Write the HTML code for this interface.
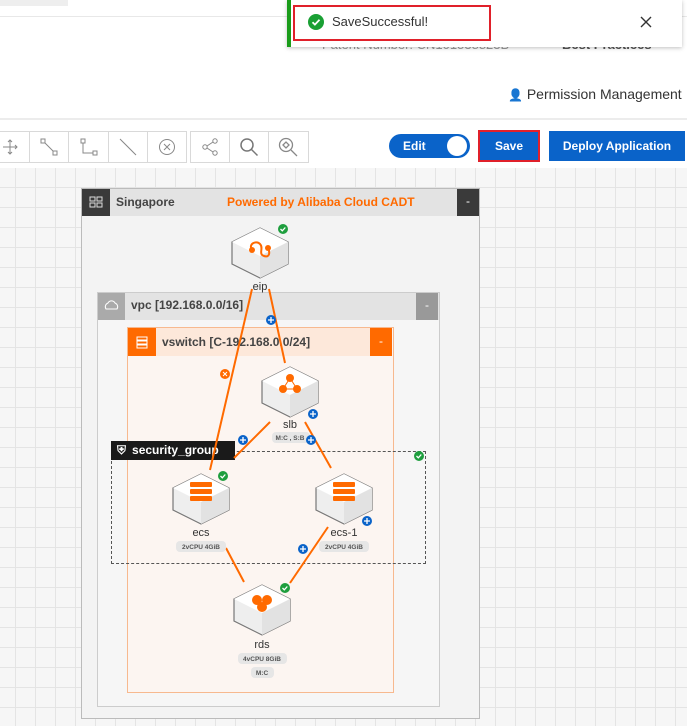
<!DOCTYPE html>
<html><head><meta charset="utf-8"><style>
body{margin:0;width:687px;height:726px;overflow:hidden;background:#fff;font-family:"Liberation Sans",sans-serif;position:relative}
.abs{position:absolute}
.grid{left:0;top:168px;width:687px;height:558px;background-color:#f6f6f6;background-image:linear-gradient(#e4e4e4 1px,transparent 1px),linear-gradient(90deg,#e4e4e4 1px,transparent 1px);background-size:20px 20px;background-position:15px 19px}
.tb{top:131px;height:30px;border:1px solid #d9d9d9;background:#fff;display:flex}
.tb div{width:44px;border-right:1px solid #d9d9d9;display:flex;align-items:center;justify-content:center}
.tb div:last-child{border-right:none}
</style></head><body>
<div class="abs" style="left:0;top:0;width:687px;height:16px;border-bottom:1px solid #e8e8e8"></div>
<div class="abs" style="left:0;top:0;width:68px;height:6px;background:#eee"></div>
<div class="abs" style="left:322px;top:37px;font-size:13px;color:#999">Patent Number: CN101538823B</div>
<div class="abs" style="left:562px;top:37px;font-size:13px;color:#555;font-weight:bold">Best Practices</div>
<div class="abs" style="left:0;top:118px;width:687px;border-top:2px solid #ececec"></div>
<div class="abs" style="left:508px;top:86px;font-size:14px;color:#333"><span style="font-size:12px">&#x1F464;</span> Permission Management</div>

<div class="abs" style="left:287px;top:0;width:391px;height:47px;background:#fff;box-shadow:0 1px 4px rgba(0,0,0,.25);border-left:4px solid #1a9c1a"></div>
<div class="abs" style="left:293px;top:5px;width:194px;height:32px;border:2px solid #e0202a"></div>
<div class="abs" style="left:308px;top:14px;width:16px;height:16px;border-radius:50%;background:#1aa034"><svg width="16" height="16"><path d="M4.5 8.2l2.4 2.4 4.6-4.8" stroke="#fff" stroke-width="1.8" fill="none"/></svg></div>
<div class="abs" style="left:332px;top:14px;font-size:13px;color:#333">SaveSuccessful!</div>
<svg class="abs" style="left:640px;top:16px" width="12" height="12"><path d="M1 1l10 10M11 1L1 11" stroke="#333" stroke-width="1.4"/></svg>

<div class="abs tb" style="left:-10px;width:195px">
<div><svg width="16" height="16" stroke="#888" fill="none"><path d="M8 1v14M1 8h14M6 3l2-2 2 2M6 13l2 2 2-2M13 6l2 2-2 2"/></svg></div>
<div><svg width="20" height="20" stroke="#888" fill="none"><rect x="2" y="2" width="4" height="4"/><rect x="14" y="14" width="4" height="4"/><path d="M6 6l8 8"/></svg></div>
<div><svg width="20" height="20" stroke="#888" fill="none"><rect x="2" y="2" width="4" height="4"/><rect x="14" y="14" width="4" height="4"/><path d="M4 6v10h10"/></svg></div>
<div><svg width="20" height="20" stroke="#888"><path d="M2 2l16 16"/></svg></div>
<div><svg width="18" height="18" stroke="#888" fill="none"><circle cx="9" cy="9" r="7.5"/><path d="M6 6l6 6M12 6l-6 6"/></svg></div>
</div>
<div class="abs tb" style="left:190px;width:117px">
<div style="width:38px"><svg width="18" height="18" stroke="#888" fill="none"><circle cx="4" cy="9" r="2.2"/><circle cx="14" cy="3" r="2.2"/><circle cx="14" cy="15" r="2.2"/><path d="M6 8l6-4M6 10l6 4"/></svg></div>
<div style="width:38px"><svg width="20" height="20" stroke="#777" fill="none" stroke-width="1.5"><circle cx="8" cy="8" r="6"/><path d="M12.5 12.5l6 6"/></svg></div>
<div style="width:38px"><svg width="20" height="20" stroke="#888" fill="none" stroke-width="1.3"><circle cx="8" cy="8" r="6.5"/><path d="M13 13l6 6M5 8l3-3 3 3-3 3z"/></svg></div>
</div>
<div class="abs" style="left:389px;top:134px;width:81px;height:24px;border-radius:12px;background:#0a63c9"></div>
<div class="abs" style="left:403px;top:139px;font-size:12px;color:#fff;font-weight:bold">Edit</div>
<div class="abs" style="left:447px;top:136px;width:20px;height:20px;border-radius:50%;background:#fff"></div>
<div class="abs" style="left:478px;top:130px;width:58px;height:28px;background:#0a63c9;border:2px solid #e0202a;color:#fff;font-size:12px;font-weight:bold;text-align:center;line-height:29px">Save</div>
<div class="abs" style="left:549px;top:131px;width:136px;height:30px;background:#0a63c9;color:#fff;font-size:12px;font-weight:bold;text-align:center;line-height:31px">Deploy Application</div>

<div class="abs grid"></div>

<div class="abs" style="left:81px;top:188px;width:397px;height:529px;background:#f3f3f3;border:1px solid #bbb"></div>
<div class="abs" style="left:82px;top:189px;width:397px;height:27px;background:#e3e3e3"></div>
<div class="abs" style="left:82px;top:189px;width:28px;height:27px;background:#3a3a3a"><svg width="28" height="27" stroke="#ddd" fill="none"><rect x="8" y="8" width="5" height="4"/><rect x="15" y="8" width="5" height="4"/><rect x="8" y="14" width="5" height="4"/><rect x="15" y="14" width="5" height="4"/></svg></div>
<div class="abs" style="left:116px;top:195px;font-size:12px;font-weight:bold;color:#444">Singapore</div>
<div class="abs" style="left:227px;top:195px;font-size:12px;font-weight:bold;color:#ff6a00">Powered by Alibaba Cloud CADT</div>
<div class="abs" style="left:457px;top:189px;width:22px;height:27px;background:#3a3a3a;color:#fff;font-size:12px;text-align:center;line-height:25px">-</div>

<div class="abs" style="left:97px;top:292px;width:341px;height:413px;background:#f6f6f6;border:1px solid #ccc"></div>
<div class="abs" style="left:98px;top:293px;width:341px;height:27px;background:#e3e3e3"></div>
<div class="abs" style="left:98px;top:293px;width:27px;height:27px;background:#aaa"><svg width="27" height="27" stroke="#fff" fill="none"><path d="M8 16a4 4 0 0 1 2-6a4 4 0 0 1 7 0a4 4 0 0 1 2 6z"/></svg></div>
<div class="abs" style="left:131px;top:298px;font-size:12px;font-weight:bold;color:#444">vpc [192.168.0.0/16]</div>
<div class="abs" style="left:416px;top:293px;width:22px;height:27px;background:#999;color:#fff;font-size:12px;text-align:center;line-height:25px">-</div>

<div class="abs" style="left:127px;top:327px;width:265px;height:364px;background:#fcf5f1;border:1px solid #f7b98f"></div>
<div class="abs" style="left:128px;top:328px;width:264px;height:28px;background:#fde8da"></div>
<div class="abs" style="left:128px;top:328px;width:28px;height:28px;background:#ff6a00"><svg width="28" height="28" stroke="#fff" fill="none"><rect x="9" y="9" width="10" height="3"/><rect x="9" y="13" width="10" height="3"/><rect x="9" y="17" width="10" height="3"/></svg></div>
<div class="abs" style="left:162px;top:335px;font-size:12px;font-weight:bold;color:#444">vswitch [C-192.168.0.0/24]</div>
<div class="abs" style="left:370px;top:328px;width:22px;height:28px;background:#ff6a00;color:#fff;font-size:12px;text-align:center;line-height:26px">-</div>

<div class="abs" style="left:111px;top:451px;width:313px;height:111px;border:1px dashed #555"></div>
<div class="abs" style="left:111px;top:441px;width:124px;height:19px;background:#1a1a1a;color:#fff;font-size:12px;font-weight:bold;line-height:19px"><span style="margin:0 6px">&#x26E8;</span>security_group</div>

<svg class="abs" style="left:0;top:0" width="687" height="726">
<defs>
<g id="cube"><polygon points="0,-24 28,-10 28,12 0,26 -28,12 -28,-10" fill="#eee" stroke="#777" stroke-width="1.2"/><polygon points="0,-24 28,-10 0,4 -28,-10" fill="#fff"/><polygon points="0,4 28,-10 28,12 0,26" fill="#e2e2e2"/></g>
<g id="ok"><circle r="5" fill="#1e9e3e"/><path d="M-2.5 0l1.8 1.8 3-3.3" stroke="#fff" stroke-width="1.3" fill="none"/></g>
<g id="plus"><circle r="5" fill="#0a63c9"/><path d="M-3 0h6M0 -3v6" stroke="#fff" stroke-width="1.3"/></g>
</defs>
<g stroke="#ff6a00" stroke-width="2">
<path d="M252 289L210 470M269 289L285 363M270 422L234 458M305 422L331 468M226 548L244 582M328 527L290 583"/>
</g>
<use href="#cube" x="260" y="252"/><use href="#cube" x="290" y="391"/><use href="#cube" x="201" y="498"/><use href="#cube" x="344" y="498"/><use href="#cube" x="262" y="609"/>
<g stroke="#ff6a00" stroke-width="2" fill="none"><path d="M252 250c-4-6 4-10 8-6s-2 10 4 12 6-4 4-8"/></g>
<circle cx="252" cy="250" r="3" fill="#ff6a00"/><circle cx="268" cy="248" r="3" fill="#ff6a00"/>
<circle cx="290" cy="378" r="4" fill="#ff6a00"/><circle cx="283" cy="389" r="4" fill="#ff6a00"/><circle cx="297" cy="389" r="4" fill="#ff6a00"/><path d="M290 378L283 389H297Z" stroke="#ff6a00" fill="none"/>
<g fill="#ff6a00"><rect x="190" y="482" width="22" height="5" rx="1"/><rect x="190" y="489" width="22" height="5" rx="1"/><rect x="190" y="496" width="22" height="5" rx="1"/>
<rect x="333" y="482" width="22" height="5" rx="1"/><rect x="333" y="489" width="22" height="5" rx="1"/><rect x="333" y="496" width="22" height="5" rx="1"/>
<circle cx="257" cy="600" r="5"/><circle cx="267" cy="600" r="5"/><circle cx="262" cy="607" r="5"/></g>
<use href="#ok" x="283" y="229"/><use href="#ok" x="223" y="476"/><use href="#ok" x="419" y="456"/><use href="#ok" x="285" y="588"/>
<use href="#plus" x="271" y="320"/><use href="#plus" x="313" y="414"/><use href="#plus" x="243" y="440"/>
<g fill="#e6e6e6"><rect x="272" y="432" width="38" height="11" rx="4"/><rect x="176" y="541" width="50" height="11" rx="4"/><rect x="319" y="541" width="50" height="11" rx="4"/><rect x="238" y="653" width="49" height="11" rx="4"/><rect x="251" y="667" width="23" height="11" rx="4"/></g>
<use href="#plus" x="311" y="440"/><use href="#plus" x="367" y="521"/><use href="#plus" x="303" y="549"/>
<circle cx="225" cy="374" r="5" fill="#ff6a00"/><path d="M223 372l4 4M227 372l-4 4" stroke="#fff"/>
<g font-family="Liberation Sans,sans-serif" font-size="11" fill="#333" text-anchor="middle">
<text x="260" y="290">eip</text><text x="290" y="428">slb</text><text x="201" y="536">ecs</text><text x="344" y="536">ecs-1</text><text x="262" y="648">rds</text></g>
<g font-family="Liberation Sans,sans-serif" font-size="6.5" font-weight="bold" fill="#555" text-anchor="middle">
<text x="290" y="440">M:C , S:B</text><text x="201" y="549">2vCPU  4GiB</text><text x="344" y="549">2vCPU  4GiB</text><text x="262" y="661">4vCPU  8GiB</text><text x="262" y="675">M:C</text></g>
</svg>
</body></html>
